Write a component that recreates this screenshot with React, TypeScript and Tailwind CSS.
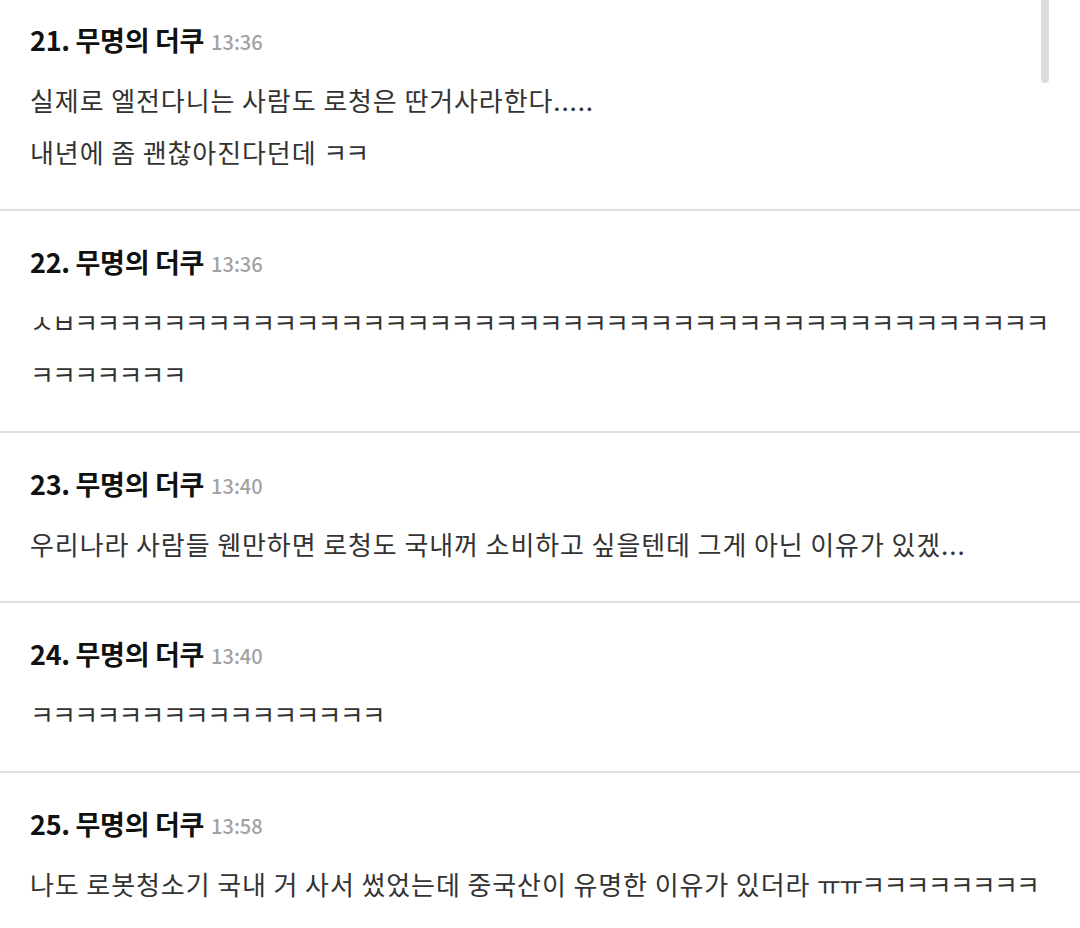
const font = { fontFamily: '"Noto Sans CJK KR", "Noto Sans", sans-serif' }

type Seg = { t: string; jamo?: boolean }
type Comment = { no: number; time: string; lines: Seg[][] }

const K = (n: number) => "ㅋ".repeat(n)

const comments: Comment[] = [
  {
    no: 21,
    time: "13:36",
    lines: [
      [{ t: "실제로 엘전다니는 사람도 로청은 딴거사라한다....." }],
      [{ t: "내년에 좀 괜찮아진다던데 " }, { t: "ㅋㅋ", jamo: true }],
    ],
  },
  {
    no: 22,
    time: "13:36",
    lines: [[{ t: "ㅅㅂ" + K(44), jamo: true }], [{ t: K(7), jamo: true }]],
  },
  {
    no: 23,
    time: "13:40",
    lines: [[{ t: "우리나라 사람들 웬만하면 로청도 국내꺼 소비하고 싶을텐데 그게 아닌 이유가 있겠..." }]],
  },
  {
    no: 24,
    time: "13:40",
    lines: [[{ t: K(16), jamo: true }]],
  },
  {
    no: 25,
    time: "13:58",
    lines: [
      [
        { t: "나도 로봇청소기 국내 거 사서 썼었는데 중국산이 유명한 이유가 있더라 " },
        { t: "ㅠㅠ" + K(8), jamo: true },
      ],
    ],
  },
]

function CommentItem({ c }: { c: Comment }) {
  return (
    <li className="border-b-2 border-[#dedede] pl-[30px] pr-[30px] pt-[33px] pb-[31px]">
      <div className="flex h-[36px] items-center gap-[7px]">
        <span className="text-[27px] font-bold tracking-[-0.3px] text-[#111]">
          {c.no}. 무명의 더쿠
        </span>
        <span className="mt-[3px] text-[20px] font-medium text-[#a2a2a2]">{c.time}</span>
      </div>
      <div className="mt-[16px] text-[26px] tracking-[0.9px] text-[#333]">
        {c.lines.map((line, i) => (
          <div key={i} className="h-[52px] overflow-hidden whitespace-nowrap leading-[52px]">
            {line.map((s, j) =>
              s.jamo ? (
                <span key={j} className="tracking-[-1.8px]">
                  {s.t}
                </span>
              ) : (
                <span key={j}>{s.t}</span>
              )
            )}
          </div>
        ))}
      </div>
    </li>
  )
}

export default function App() {
  return (
    <div className="relative h-[928px] w-[1080px] overflow-hidden bg-white" style={font}>
      <ul className="-mt-[11px]">
        {comments.map((c) => (
          <CommentItem key={c.no} c={c} />
        ))}
      </ul>
      <div className="absolute right-[31px] top-0 h-[83px] w-[8px] rounded-b-full bg-[#dcdcdc]" />
    </div>
  )
}
